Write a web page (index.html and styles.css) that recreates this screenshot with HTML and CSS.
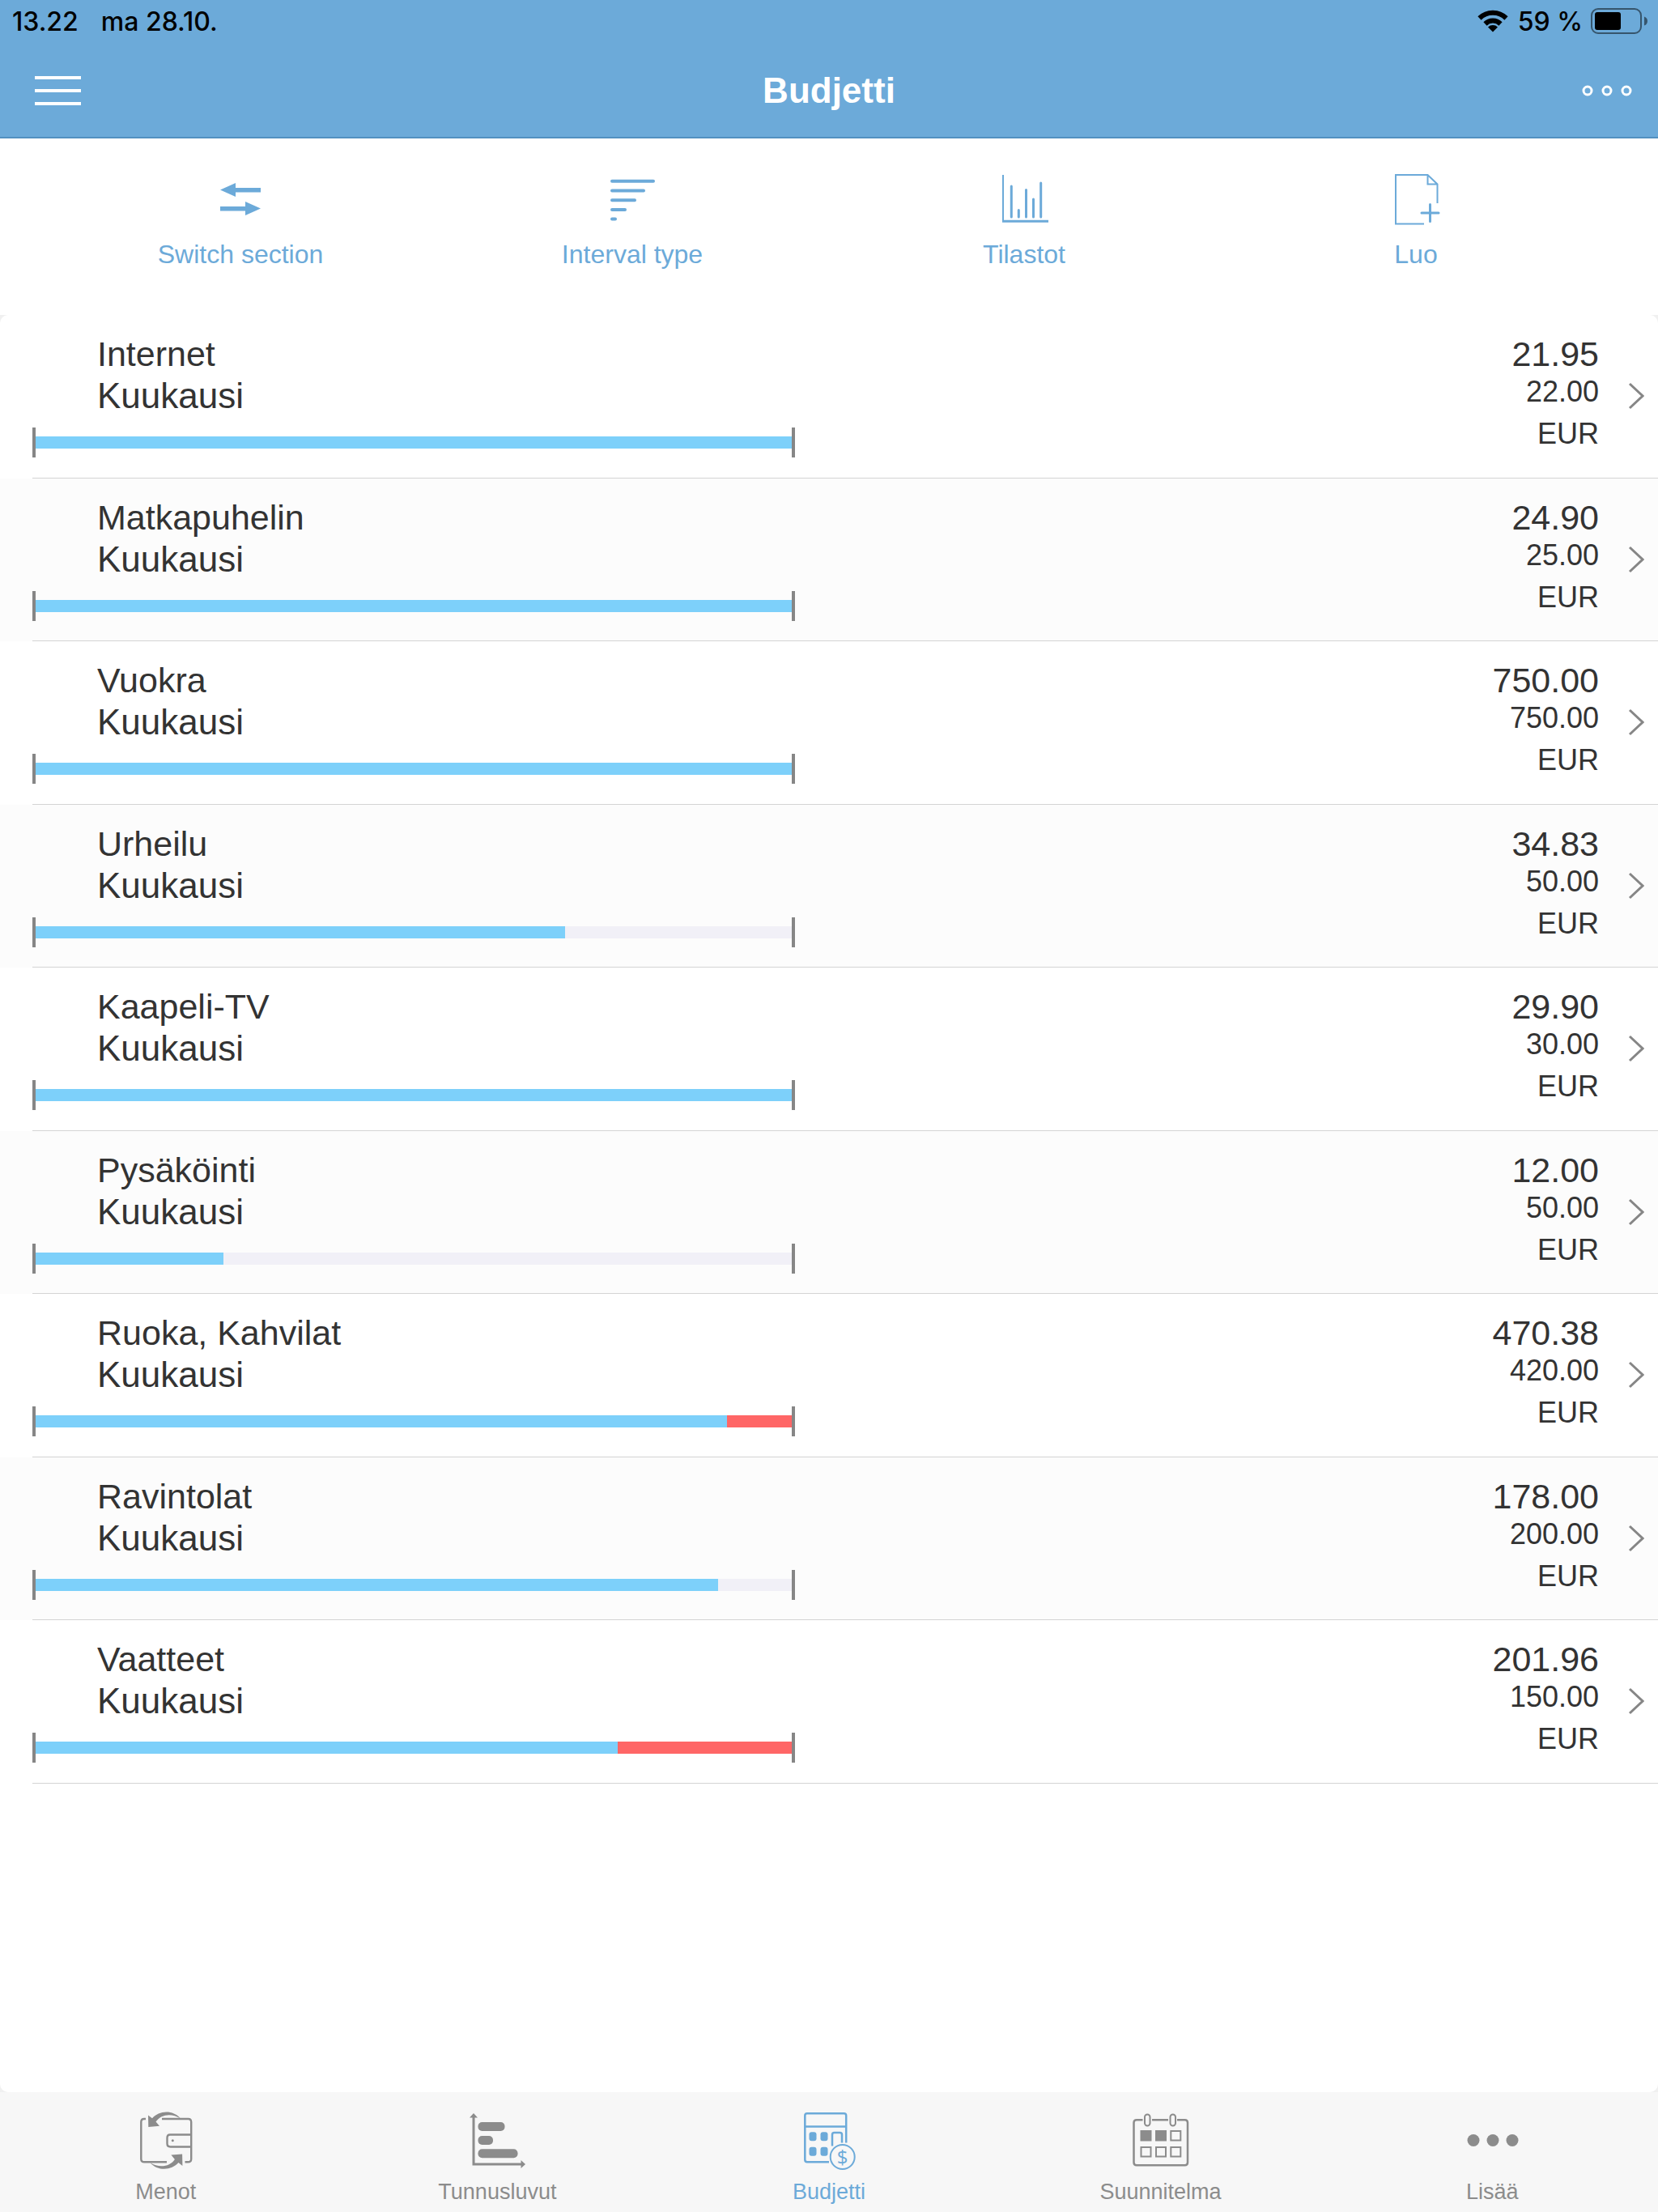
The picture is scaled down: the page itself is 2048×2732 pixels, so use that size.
FILE: index.html
```html
<!DOCTYPE html>
<html lang="fi">
<head>
  <meta charset="UTF-8" />
  <meta name="viewport" content="width=device-width, initial-scale=1.0" />
  <title>Budjetti</title>
  <link rel="stylesheet" href="styles.css">
</head>
<body>
  <header class="header">
    <div class="status">
      <span class="status-time">13.22</span>
      <span>ma 28.10.</span>
      <div class="status-right">
        <svg class="wifi" width="38" height="28" viewBox="0 0 38 28" fill="none" stroke="#000" stroke-width="6">
          <path d="M2.500 10.500a23.500 23.500 0 0 1 33 0" />
          <path d="M9.500 17.500a13.500 13.500 0 0 1 19 0" />
          <path d="M19 27.500l-6-6a8.500 8.500 0 0 1 12 0z" fill="#000" stroke="none" />
        </svg>
        <span>59 %</span>
        <svg width="72" height="32" viewBox="0 0 72 32">
          <rect x="1" y="1" width="61" height="30" rx="8" fill="none" stroke="#000" stroke-opacity=".5" stroke-width="2" />
          <rect x="5" y="5" width="32" height="22" rx="3" />
          <path d="M66 10.500q4 1.500 4 5.500t-4 5.500z" fill-opacity=".5" />
        </svg>
      </div>
    </div>
    <div class="nav">
      <button class="nav-btn" type="button" aria-label="Valikko">
        <svg width="58" height="36" viewBox="0 0 58 36" fill="#fff">
          <rect x="0" width="57" height="4" />
          <rect x="0" y="16" width="57" height="4" />
          <rect x="0" y="32" width="57" height="4" />
        </svg>
      </button>
      <h1 class="title">Budjetti</h1>
      <button class="nav-btn nav-more" type="button" aria-label="Toiminnot">
        <svg width="64" height="16" viewBox="0 0 64 16" fill="none" stroke="#fff" stroke-width="3">
          <circle cx="8" cy="8" r="5" />
          <circle cx="32" cy="8" r="5" />
          <circle cx="56" cy="8" r="5" />
        </svg>
      </button>
    </div>
  </header>

  <div class="tools">
    <button class="tool" type="button">
      <svg width="64" height="64" viewBox="0 0 64 64" fill="#6caad9">
        <path d="M7 20.500l19-8.500v6h31v5.500H26v5.500z" />
        <path d="M57 43.500l-19-8.500v6H7v5.500h31v5.500z" />
      </svg>
      Switch section
    </button>
    <button class="tool" type="button">
      <svg width="64" height="64" viewBox="0 0 64 64" stroke="#6caad9" stroke-width="4" stroke-linecap="round">
        <path d="M7 9.700h51M7 21.500h39M7 33.300h28M7 45h16M7 56.500h4" />
      </svg>
      Interval type
    </button>
    <button class="tool" type="button">
      <svg width="64" height="64" viewBox="0 0 64 64" fill="none" stroke="#6caad9" stroke-width="3">
        <path d="M6 2v57.500" stroke-width="2" />
        <path d="M5 59.300h57" />
        <path stroke-linecap="round" d="M16.300 16v38M25.300 45.500v8.500M34.500 20.500v33.500M43.500 32v22M52.700 12v42" />
      </svg>
      Tilastot
    </button>
    <button class="tool" type="button">
      <svg width="64" height="64" viewBox="0 0 64 64" fill="none" stroke="#6caad9" stroke-width="2">
        <path d="M42 62.500H7V2H46.500l12 11.500v23.500M46.500 2v11.500h12" />
        <path d="M39 49h21M49.500 38.500v21" stroke-width="3" stroke-linecap="round" />
      </svg>
      Luo
    </button>
  </div>

  <main class="panel">
    <ul class="list">
      <li class="item">
        <a class="row" href="#">
          <div class="main">
            <div class="name">Internet</div>
            <div class="period">Kuukausi</div>
            <div class="meter"><div class="track"><div class="fill" style="width: 100%"></div></div></div>
          </div>
          <div class="sums">
            <div class="spent">21.95</div>
            <div class="limit">22.00</div>
            <div class="currency">EUR</div>
          </div>
          <svg class="chevron" width="20" height="34" viewBox="0 0 20 34"><path d="M2 2l16 15L2 32" /></svg>
        </a>
      </li>
      <li class="item">
        <a class="row" href="#">
          <div class="main">
            <div class="name">Matkapuhelin</div>
            <div class="period">Kuukausi</div>
            <div class="meter"><div class="track"><div class="fill" style="width: 100%"></div></div></div>
          </div>
          <div class="sums">
            <div class="spent">24.90</div>
            <div class="limit">25.00</div>
            <div class="currency">EUR</div>
          </div>
          <svg class="chevron" width="20" height="34" viewBox="0 0 20 34"><path d="M2 2l16 15L2 32" /></svg>
        </a>
      </li>
      <li class="item">
        <a class="row" href="#">
          <div class="main">
            <div class="name">Vuokra</div>
            <div class="period">Kuukausi</div>
            <div class="meter"><div class="track"><div class="fill" style="width: 100%"></div></div></div>
          </div>
          <div class="sums">
            <div class="spent">750.00</div>
            <div class="limit">750.00</div>
            <div class="currency">EUR</div>
          </div>
          <svg class="chevron" width="20" height="34" viewBox="0 0 20 34"><path d="M2 2l16 15L2 32" /></svg>
        </a>
      </li>
      <li class="item">
        <a class="row" href="#">
          <div class="main">
            <div class="name">Urheilu</div>
            <div class="period">Kuukausi</div>
            <div class="meter"><div class="track"><div class="fill" style="width: 70%"></div></div></div>
          </div>
          <div class="sums">
            <div class="spent">34.83</div>
            <div class="limit">50.00</div>
            <div class="currency">EUR</div>
          </div>
          <svg class="chevron" width="20" height="34" viewBox="0 0 20 34"><path d="M2 2l16 15L2 32" /></svg>
        </a>
      </li>
      <li class="item">
        <a class="row" href="#">
          <div class="main">
            <div class="name">Kaapeli-TV</div>
            <div class="period">Kuukausi</div>
            <div class="meter"><div class="track"><div class="fill" style="width: 100%"></div></div></div>
          </div>
          <div class="sums">
            <div class="spent">29.90</div>
            <div class="limit">30.00</div>
            <div class="currency">EUR</div>
          </div>
          <svg class="chevron" width="20" height="34" viewBox="0 0 20 34"><path d="M2 2l16 15L2 32" /></svg>
        </a>
      </li>
      <li class="item">
        <a class="row" href="#">
          <div class="main">
            <div class="name">Pysäköinti</div>
            <div class="period">Kuukausi</div>
            <div class="meter"><div class="track"><div class="fill" style="width: 24.8%"></div></div></div>
          </div>
          <div class="sums">
            <div class="spent">12.00</div>
            <div class="limit">50.00</div>
            <div class="currency">EUR</div>
          </div>
          <svg class="chevron" width="20" height="34" viewBox="0 0 20 34"><path d="M2 2l16 15L2 32" /></svg>
        </a>
      </li>
      <li class="item">
        <a class="row" href="#">
          <div class="main">
            <div class="name">Ruoka, Kahvilat</div>
            <div class="period">Kuukausi</div>
            <div class="meter"><div class="track over"><div class="fill" style="width: 91.4%"></div></div></div>
          </div>
          <div class="sums">
            <div class="spent">470.38</div>
            <div class="limit">420.00</div>
            <div class="currency">EUR</div>
          </div>
          <svg class="chevron" width="20" height="34" viewBox="0 0 20 34"><path d="M2 2l16 15L2 32" /></svg>
        </a>
      </li>
      <li class="item">
        <a class="row" href="#">
          <div class="main">
            <div class="name">Ravintolat</div>
            <div class="period">Kuukausi</div>
            <div class="meter"><div class="track"><div class="fill" style="width: 90.2%"></div></div></div>
          </div>
          <div class="sums">
            <div class="spent">178.00</div>
            <div class="limit">200.00</div>
            <div class="currency">EUR</div>
          </div>
          <svg class="chevron" width="20" height="34" viewBox="0 0 20 34"><path d="M2 2l16 15L2 32" /></svg>
        </a>
      </li>
      <li class="item">
        <a class="row" href="#">
          <div class="main">
            <div class="name">Vaatteet</div>
            <div class="period">Kuukausi</div>
            <div class="meter"><div class="track over"><div class="fill" style="width: 77%"></div></div></div>
          </div>
          <div class="sums">
            <div class="spent">201.96</div>
            <div class="limit">150.00</div>
            <div class="currency">EUR</div>
          </div>
          <svg class="chevron" width="20" height="34" viewBox="0 0 20 34"><path d="M2 2l16 15L2 32" /></svg>
        </a>
      </li>
    </ul>
  </main>

  <nav class="tabs">
    <a class="tab" href="#">
      <svg width="72" height="72" viewBox="0 0 72 72" fill="none" stroke="currentColor" stroke-width="2.400">
        <path d="M11 9H9q-3.700 0-3.700 4v45.500q0 3.800 4 3.800H37M31 9h32.500q3.700 0 3.700 4v45.500q0 3.800-4 3.800H59.500" />
        <path d="M67 28.500H41q-3.500 0-3.500 4v7q0 4 4 4H67" />
        <circle cx="44.300" cy="35.700" r="1.500" fill="currentColor" stroke="none" />
        <g fill="currentColor" stroke="none">
          <path d="M14 4.500l5 3.800C27-1 44-3 54 8.500 43 1.500 30 3 23.500 12.500l4.500 5.300L14.300 19z" />
          <path transform="rotate(180 35.200 35.700)" d="M14 4.500l5 3.800C27-1 44-3 54 8.500 43 1.500 30 3 23.500 12.500l4.500 5.300L14.300 19z" />
        </g>
      </svg>
      Menot
    </a>
    <a class="tab" href="#">
      <svg width="72" height="72" viewBox="0 0 72 72" fill="currentColor">
        <path d="M7 6v59h60" fill="none" stroke="currentColor" stroke-width="3" />
        <path d="M7 2l5 5.500H2zM71 65l-5.500 5V60z" />
        <rect x="12.500" y="13" width="33" height="11" rx="5" />
        <rect x="12.500" y="30" width="18.500" height="11" rx="5" />
        <rect x="12.500" y="46.300" width="49" height="11" rx="5" />
      </svg>
      Tunnusluvut
    </a>
    <a class="tab active" href="#">
      <svg width="72" height="72" viewBox="0 0 72 72" fill="none" stroke="currentColor" stroke-width="2.500">
        <path d="M36 62.300H9q-2.700 0-2.700-2.700V5q0-2.700 2.700-2.700h45.500q2.700 0 2.700 2.700v33.500M6.300 18.500h51" />
        <path d="M40 42.500V28.500q0-2.500 2.500-2.500h7q2.500 0 2.500 2.500v10" />
        <circle cx="52.700" cy="56" r="15" stroke-width="2" />
        <g fill="currentColor" stroke="none">
          <rect x="11.500" y="25.300" width="9" height="11" rx="3" />
          <rect x="25.500" y="25.300" width="9" height="11" rx="3" />
          <rect x="11.500" y="43.800" width="9" height="11" rx="3" />
          <rect x="25.500" y="43.800" width="9" height="11" rx="3" />
          <text class="coin" x="52.700" y="64.500" text-anchor="middle">$</text>
        </g>
      </svg>
      Budjetti
    </a>
    <a class="tab" href="#">
      <svg width="72" height="72" viewBox="0 0 72 72" fill="none" stroke="currentColor" stroke-width="2.500">
        <path d="M13.500 10.300H6q-3.500 0-3.500 3.500v49q0 3.500 3.500 3.500h59.500q3.500 0 3.500-3.500v-49q0-3.500-3.500-3.500H56M25 10.300h20" />
        <g stroke-width="2">
          <rect x="16" y="3.500" width="6.500" height="14" rx="3.200" />
          <rect x="47.500" y="3.500" width="6.500" height="14" rx="3.200" />
          <rect x="11.500" y="24" width="12" height="11.500" fill="currentColor" />
          <rect x="30" y="24" width="12" height="11.500" fill="currentColor" />
          <rect x="48.300" y="24" width="12" height="11.500" />
          <rect x="11.500" y="44" width="12" height="11.500" />
          <rect x="30" y="44" width="12" height="11.500" />
          <rect x="48.300" y="44" width="12" height="11.500" />
        </g>
      </svg>
      Suunnitelma
    </a>
    <a class="tab" href="#">
      <svg width="72" height="72" viewBox="0 0 72 72" fill="currentColor">
        <circle cx="13" cy="35.500" r="7.500" />
        <circle cx="37" cy="35.500" r="7.500" />
        <circle cx="61" cy="35.500" r="7.500" />
      </svg>
      Lisää
    </a>
  </nav>
</body>
</html>
```

FILE: styles.css
```css
* {
  box-sizing: border-box;
}
body {
  margin: 0;
  min-height: 100vh;
  display: flex;
  flex-direction: column;
  background-color: #f0f0f0;
  color: #333;
  font-family: "Liberation Sans", Arial, sans-serif;
}
svg {
  display: block;
}
button {
  border: 0;
  padding: 0;
  background: none;
  font-family: inherit;
}
a {
  color: inherit;
  text-decoration: none;
}

/* header */
.header {
  background-color: #6caad9;
  border-bottom: 2px solid #5290c0;
}
.status {
  display: flex;
  align-items: center;
  height: 52px;
  padding: 0 11px 0 15px;
  color: #000;
  font-family: Inter, sans-serif;
  font-size: 32px;
  font-weight: 500;
}
.status-time {
  margin-right: 28px;
}
.status-right {
  display: flex;
  align-items: center;
  gap: 10px;
  margin-left: auto;
}
.wifi {
  margin-right: 2px;
}
.nav {
  display: grid;
  grid-template-columns: 1fr auto 1fr;
  align-items: center;
  height: 117px;
  padding: 2px 31px 0;
}
.nav-btn {
  justify-self: start;
  padding-left: 12px;
}
.nav-more {
  justify-self: end;
}
.title {
  margin: 0;
  color: #fff;
  font-size: 44px;
  line-height: 52px;
}

/* toolbar */
.tools {
  display: grid;
  grid-template-columns: repeat(4, 1fr);
  height: 218px;
  padding: 43px 57px 0 55px;
  background-color: #fff;
}
.tool {
  display: flex;
  flex-direction: column;
  align-items: center;
  gap: 18px;
  color: #6caad9;
  font-size: 32px;
  line-height: 36px;
}

/* budget list */
.panel {
  flex: 1;
  background-color: #fff;
  border-radius: 10px;
  overflow: hidden;
}
.list {
  list-style: none;
  margin: 0;
  padding: 0;
}
.item {
  padding-left: 40px;
}
.item:nth-child(even) {
  background-color: #fcfcfc;
}
.row {
  display: flex;
  padding: 22px 17px 25px 0;
  border-bottom: 1px solid #d4d4d4;
}
.item:nth-child(even) .row {
  padding-bottom: 24px;
}
.main {
  width: 46vw;
}
.name,
.period {
  padding-left: 80px;
  line-height: 52px;
}
.name,
.spent {
  font-size: 43px;
}
.period {
  font-size: 44px;
}
.meter {
  height: 37px;
  margin-top: 13px;
  padding: 11px 0;
  border-left: 4px solid #868686;
  border-right: 4px solid #868686;
}
.track {
  height: 15px;
  background-color: #f1f0f7;
}
.track.over {
  background-color: #ff6666;
}
.fill {
  height: 100%;
  background-color: #7dd0fa;
}
.sums {
  margin-left: auto;
  text-align: right;
}
.spent {
  line-height: 52px;
}
.limit,
.currency {
  font-size: 36px;
  line-height: 42px;
}
.currency {
  margin-top: 10px;
}
.chevron {
  margin: 61px 0 0 36px;
  fill: none;
  stroke: #868686;
  stroke-width: 3;
}

/* bottom tabs */
.tabs {
  display: grid;
  grid-template-columns: repeat(5, 1fr);
  padding: 24px 0 7px;
  background-color: #f7f7f7;
}
.tab {
  display: flex;
  flex-direction: column;
  align-items: center;
  gap: 9px;
  color: #8c8c8c;
  font-size: 27px;
  line-height: 36px;
}
.tab.active {
  color: #6caad9;
}
.coin {
  font-family: "Open Sans", sans-serif;
  font-size: 24px;
}
```
